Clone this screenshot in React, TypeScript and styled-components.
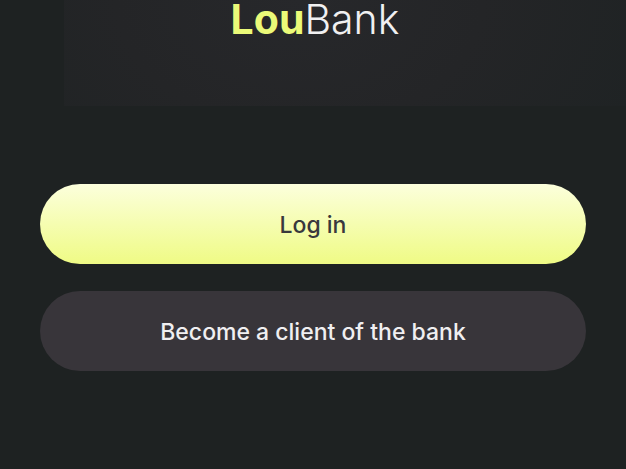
import React from "react";
import styled, { createGlobalStyle } from "styled-components";

const GlobalStyle = createGlobalStyle`
  * { box-sizing: border-box; }
  body {
    margin: 0;
    background: #1e2222;
    font-family: Inter, "Liberation Sans", sans-serif;
  }
`;

const Page = styled.main`
  display: flex;
  flex-direction: column;
  min-height: 100vh;
  background: #1e2222;
`;

const Hero = styled.header`
  display: flex;
  justify-content: center;
  height: 106px;
  padding-right: 60px;
  margin-left: 64px;
  background: radial-gradient(ellipse 65% 240% at 42% 0, #27282b, #242527 50%, #1f2324);
`;

const Brand = styled.h1`
  margin: 0;
  font-size: 41px;
  line-height: 38px;
  font-weight: 300;
  color: #f0f0f1;
`;

const BrandAccent = styled.span`
  font-weight: 700;
  color: #ebfa78;
`;

const Actions = styled.div`
  display: flex;
  flex-direction: column;
  gap: 27px;
  padding: 78px 40px 0;
`;

const Button = styled.button<{ $primary?: boolean }>`
  height: 80px;
  padding: 2px 24px 0;
  border: 0;
  border-radius: 40px;
  font: 500 23px/32px Inter, "Liberation Sans", sans-serif;
  color: ${(p) => (p.$primary ? "#39383d" : "#f0eff1")};
  background: ${(p) =>
    p.$primary ? "linear-gradient(#fcffdc, #effb85)" : "#38353a"};
  cursor: pointer;
`;

export default function App() {
  return (
    <>
      <GlobalStyle />
      <Page>
        <Hero>
          <Brand>
            <BrandAccent>Lou</BrandAccent>Bank
          </Brand>
        </Hero>
        <Actions>
          <Button type="button" $primary>Log in</Button>
          <Button type="button">Become a client of the bank</Button>
        </Actions>
      </Page>
    </>
  );
}
